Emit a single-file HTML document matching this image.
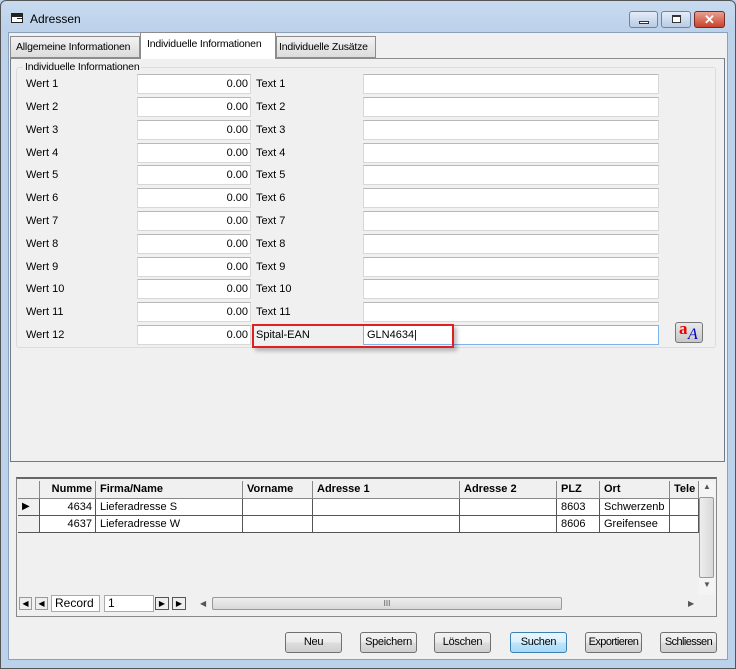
<!DOCTYPE html>
<html><head><style>
*{margin:0;padding:0;box-sizing:border-box}
body{width:736px;height:669px;overflow:hidden;background:#bcd3ec;font-family:"Liberation Sans",Arial,sans-serif;font-size:11px;color:#000;position:relative}
.a{position:absolute}
.lbl{position:absolute;font-size:11px;white-space:nowrap}
.in{position:absolute;background:#fff;border:1px solid #d8d8d8;border-top-color:#b8b8b8;height:20px;font-size:11px;line-height:18px}
.btn{position:absolute;top:632px;height:21px;width:57px;border:1px solid #707070;border-radius:3px;background:linear-gradient(#f2f2f2,#ebebeb 50%,#dddddd 51%,#cfcfcf);text-align:center;line-height:19px;font-size:11px;letter-spacing:-0.3px}
.th{position:absolute;top:481px;height:18px;border-right:1px solid #888;border-bottom:1px solid #888;background:#f0f0f0;font-weight:bold;font-size:11px;line-height:17px;padding-left:4px;white-space:nowrap;overflow:hidden}
.td{position:absolute;height:17px;border-right:1px solid #555;border-bottom:1px solid #555;background:#fff;font-size:11px;line-height:16px;padding-left:4px;white-space:nowrap;overflow:hidden}
</style></head><body>
<div class="a" style="left:0;top:0;width:736px;height:669px;border:1px solid #555;border-radius:6px 6px 0 0;background:linear-gradient(#c7daef,#bcd1ea 30px,#bcd1ea)"></div>
<div class="a" style="left:11px;top:13px;width:12px;height:10px;border:1px solid #222;background:#fff"><div style="height:3px;background:#222"></div><div style="position:absolute;left:5px;top:4px;width:5px;height:1px;background:#222"></div></div>
<div class="lbl" style="left:30px;top:12px;font-size:12px">Adressen</div>
<div class="a" style="left:629px;top:11px;width:29px;height:17px;border:1px solid #6d83a0;border-radius:3px;background:linear-gradient(#e4edf8,#b8cbe3)"><div style="position:absolute;left:9px;top:9px;width:10px;height:3px;background:#fff;border:1px solid #333"></div></div>
<div class="a" style="left:661px;top:11px;width:30px;height:17px;border:1px solid #6d83a0;border-radius:3px;background:linear-gradient(#e4edf8,#b8cbe3)"><div style="position:absolute;left:10px;top:3px;width:9px;height:8px;background:#fff;border:1px solid #333;border-top-width:2px"></div></div>
<div class="a" style="left:694px;top:11px;width:31px;height:17px;border:1px solid #7a2a20;border-radius:3px;background:linear-gradient(#e8a090,#c8432d);color:#fff;font-weight:bold;text-align:center;line-height:15px;font-size:13px">✕</div>
<div class="a" style="left:8px;top:32px;width:720px;height:628px;background:#f0f0f0;border:1px solid #8aa0bb"></div>
<div class="a" style="left:10px;top:36px;width:130px;height:22px;border:1px solid #8c8c8c;background:linear-gradient(#f2f2f2,#dcdcdc)"></div>
<div class="lbl" style="left:16px;top:41px;font-size:10.5px;letter-spacing:-0.2px">Allgemeine Informationen</div>
<div class="a" style="left:276px;top:36px;width:100px;height:22px;border:1px solid #8c8c8c;background:linear-gradient(#f2f2f2,#dcdcdc)"></div>
<div class="lbl" style="left:279px;top:41px;font-size:10.5px;letter-spacing:-0.2px">Individuelle Zusätze</div>
<div class="a" style="left:10px;top:58px;width:715px;height:404px;border:1px solid #6a7b8c;border-top-color:#8c8c8c;background:#f0f0f0"></div>
<div class="a" style="left:140px;top:32px;width:136px;height:27px;border:1px solid #8c8c8c;border-bottom:none;background:#fff"></div>
<div class="lbl" style="left:147px;top:38px;font-size:10.5px;letter-spacing:-0.2px">Individuelle Informationen</div>
<div class="a" style="left:16px;top:67px;width:700px;height:281px;border:1px solid #dcdcdc;border-radius:3px"></div>
<div class="lbl" style="left:23px;top:61px;background:#f0f0f0;padding:0 2px;font-size:10.5px;letter-spacing:-0.2px">Individuelle Informationen</div>
<div id="rows"></div>
<div class="a" style="left:252px;top:324px;width:202px;height:24px;border:2px solid #e02020;box-shadow:3px 3px 4px rgba(0,0,0,.25)"></div>
<div class="a" style="left:675px;top:322px;width:28px;height:21px;border:1px solid #777;border-radius:3px;background:linear-gradient(#e8e8e8,#c8c8c8)"><span style="position:absolute;left:3px;top:-4px;color:#e00;font-weight:bold;font-size:17px;font-family:'Liberation Serif',serif">a</span><span style="position:absolute;left:12px;top:3px;color:#00c;font-style:italic;font-size:16px;font-family:'Liberation Serif',serif">A</span></div>
<div class="a" style="left:16px;top:477px;width:701px;height:140px;border:1px solid #888;border-top:2px solid #666;background:#f0f0f0"></div>
<div class="th" style="left:18px;width:22px"></div>
<div class="th" style="left:40px;width:56px;text-align:right;padding-right:3px">Numme</div>
<div class="th" style="left:96px;width:147px">Firma/Name</div>
<div class="th" style="left:243px;width:70px">Vorname</div>
<div class="th" style="left:313px;width:147px">Adresse 1</div>
<div class="th" style="left:460px;width:97px">Adresse 2</div>
<div class="th" style="left:557px;width:43px">PLZ</div>
<div class="th" style="left:600px;width:70px">Ort</div>
<div class="th" style="left:670px;width:29px">Tele</div>
<div class="td" style="top:499px;left:18px;width:22px;background:#f0f0f0;font-size:10px">▶</div>
<div class="td" style="top:499px;left:40px;width:56px;text-align:right;padding-right:3px">4634</div>
<div class="td" style="top:499px;left:96px;width:147px">Lieferadresse S</div>
<div class="td" style="top:499px;left:243px;width:70px"></div>
<div class="td" style="top:499px;left:313px;width:147px"></div>
<div class="td" style="top:499px;left:460px;width:97px"></div>
<div class="td" style="top:499px;left:557px;width:43px">8603</div>
<div class="td" style="top:499px;left:600px;width:70px">Schwerzenb</div>
<div class="td" style="top:499px;left:670px;width:29px"></div>
<div class="td" style="top:516px;left:18px;width:22px;background:#f0f0f0"></div>
<div class="td" style="top:516px;left:40px;width:56px;text-align:right;padding-right:3px">4637</div>
<div class="td" style="top:516px;left:96px;width:147px">Lieferadresse W</div>
<div class="td" style="top:516px;left:243px;width:70px"></div>
<div class="td" style="top:516px;left:313px;width:147px"></div>
<div class="td" style="top:516px;left:460px;width:97px"></div>
<div class="td" style="top:516px;left:557px;width:43px">8606</div>
<div class="td" style="top:516px;left:600px;width:70px">Greifensee</div>
<div class="td" style="top:516px;left:670px;width:29px"></div>
<div class="a" style="left:699px;top:481px;width:16px;height:114px;background:#f4f4f4"></div>
<div class="lbl" style="left:703px;top:482px;font-size:8px;color:#555">▲</div>
<div class="a" style="left:699px;top:497px;width:15px;height:81px;border:1px solid #999;border-radius:2px;background:linear-gradient(90deg,#eee,#d8d8d8)"></div>
<div class="lbl" style="left:703px;top:580px;font-size:8px;color:#555">▼</div>
<div class="a" style="left:19px;top:597px;width:13px;height:13px;border:1px solid #999;background:#eee;font-size:8px;text-align:center;line-height:11px">◀</div>
<div class="a" style="left:35px;top:597px;width:13px;height:13px;border:1px solid #999;background:#eee;font-size:8px;text-align:center;line-height:11px">◀</div>
<div class="a" style="left:51px;top:595px;width:49px;height:17px;border:1px solid #aaa;background:#fff;font-size:12px;line-height:15px;padding-left:3px">Record</div>
<div class="a" style="left:104px;top:595px;width:50px;height:17px;border:1px solid #aaa;background:#fff;font-size:12px;line-height:15px;padding-left:3px">1</div>
<div class="a" style="left:155px;top:597px;width:14px;height:13px;border:1px solid #555;background:#eee;font-size:8px;text-align:center;line-height:11px">▶</div>
<div class="a" style="left:172px;top:597px;width:14px;height:13px;border:1px solid #555;background:#eee;font-size:8px;text-align:center;line-height:11px">▶</div>
<div class="a" style="left:212px;top:597px;width:350px;height:13px;border:1px solid #999;border-radius:2px;background:linear-gradient(#eee,#d8d8d8);text-align:center;font-size:8px;line-height:11px;color:#555">III</div>
<div class="lbl" style="left:200px;top:599px;font-size:8px;color:#555">◀</div>
<div class="lbl" style="left:688px;top:599px;font-size:8px;color:#555">▶</div>
<div class="btn" style="left:285px">Neu</div>
<div class="btn" style="left:360px">Speichern</div>
<div class="btn" style="left:434px">Löschen</div>
<div class="btn" style="left:510px;border-color:#3c7fb1;background:linear-gradient(#eaf6fd,#d9f0fc 50%,#bee6fd 51%,#a7d9f5)">Suchen</div>
<div class="btn" style="left:585px;letter-spacing:-0.6px">Exportieren</div>
<div class="btn" style="left:660px;letter-spacing:-0.6px">Schliessen</div>
<script>
var h='';var tops=[74,97,120,143,165,188,211,234,257,279,302,325];
for(var i=0;i<12;i++){var t=tops[i];
h+='<div class="lbl" style="left:26px;top:'+(t+4)+'px">Wert '+(i+1)+'</div>';
h+='<div class="in" style="left:137px;top:'+t+'px;width:114px;text-align:right;padding-right:2px">0.00</div>';
h+='<div class="lbl" style="left:256px;top:'+(t+4)+'px">'+(i<11?'Text '+(i+1):'Spital-EAN')+'</div>';
h+='<div class="in" style="left:363px;top:'+t+'px;width:296px;padding-left:3px'+(i==11?';border-color:#7eb4ea':'')+'">'+(i==11?'GLN4634|':'')+'</div>';}
document.getElementById('rows').innerHTML=h;
</script>
</body></html>
